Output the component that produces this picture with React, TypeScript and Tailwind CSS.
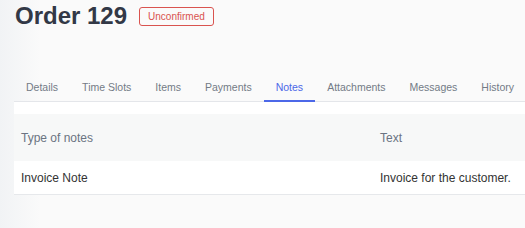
const tabs = ['Details', 'Time Slots', 'Items', 'Payments', 'Notes', 'Attachments', 'Messages', 'History'];

interface Note {
  type: string;
  text: string;
}

const notes: Note[] = [{ type: 'Invoice Note', text: 'Invoice for the customer.' }];

export default function App() {
  return (
    <div
      className="min-h-[228px] w-[525px] overflow-hidden bg-[linear-gradient(to_right,#f1f3f5,#fafafa_40px)] pl-[14px] pt-[4px]"
      style={{ fontFamily: '"Liberation Sans", Arial, sans-serif' }}
    >
      {/* Header */}
      <div className="flex items-center gap-3 pl-px">
        <h1 className="text-[24px] font-bold leading-[24px] text-[#323846]">Order 129</h1>
        <span className="rounded-[3px] border border-[#d9534f] px-2 text-[10px] leading-[17px] text-[#d9534f]">
          Unconfirmed
        </span>
      </div>

      {/* Tabs */}
      <div className="mt-[52px] flex w-[600px] border-b border-[#e4e6ea]">
        {tabs.map((tab) => {
          const active = tab === 'Notes';
          return (
            <div
              key={tab}
              className={`-mb-px shrink-0 whitespace-nowrap border-b-2 px-3 pb-[6px] text-[10.5px] leading-[14px] ${
                active ? 'border-[#4c68e8] text-[#4c68e8]' : 'border-transparent text-[#737b86]'
              }`}
            >
              {tab}
            </div>
          );
        })}
      </div>

      {/* Notes table */}
      <div className="w-[600px] bg-white pt-3">
        <div className="flex h-[47px] items-center bg-[#f7f8f8] text-[12px] text-[#6b7482]">
          <div className="w-[366px] pl-[7px]">Type of notes</div>
          <div>Text</div>
        </div>
        {notes.map((note) => (
          <div
            key={note.type}
            className="flex h-[34px] items-center border-b border-[#e6e8eb] text-[12px] text-[#333]"
          >
            <div className="w-[366px] pl-[7px]">{note.type}</div>
            <div>{note.text}</div>
          </div>
        ))}
      </div>
    </div>
  );
}
